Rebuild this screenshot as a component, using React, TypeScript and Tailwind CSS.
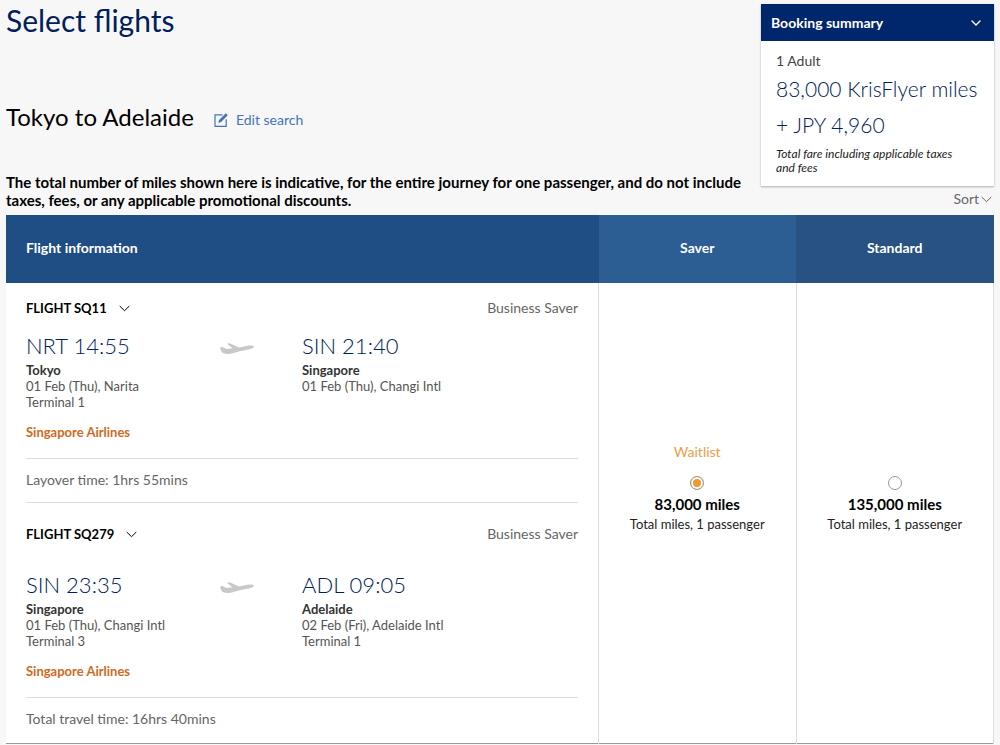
import { useState } from 'react'
import { ChevronDown } from 'lucide-react'

interface Stop {
  code: string
  time: string
  city: string
  details: string[]
}

interface Flight {
  number: string
  from: Stop
  to: Stop
}

const FLIGHTS: Flight[] = [
  {
    number: 'SQ11',
    from: { code: 'NRT', time: '14:55', city: 'Tokyo', details: ['01 Feb (Thu), Narita', 'Terminal 1'] },
    to: { code: 'SIN', time: '21:40', city: 'Singapore', details: ['01 Feb (Thu), Changi Intl'] },
  },
  {
    number: 'SQ279',
    from: { code: 'SIN', time: '23:35', city: 'Singapore', details: ['01 Feb (Thu), Changi Intl', 'Terminal 3'] },
    to: { code: 'ADL', time: '09:05', city: 'Adelaide', details: ['02 Feb (Fri), Adelaide Intl', 'Terminal 1'] },
  },
]

const FARES = [
  { id: 'saver', miles: '83,000', status: 'Waitlist' },
  { id: 'standard', miles: '135,000', status: '' },
]

function EditIcon() {
  return (
    <svg viewBox="0 0 14 14" className="h-3.5 w-3.5" fill="none" stroke="currentColor" aria-hidden="true">
      <path d="M8.5 1.8H1v11.5h11.2V6.2" strokeWidth="1.2" />
      <path d="M4.3 9.9l.8-2.9 6.2-6.2c.3-.3.7-.3 1 0l1 1c.3.3.3.7 0 1L7.1 9.1z" fill="currentColor" stroke="none" />
    </svg>
  )
}

function Chevron() {
  return (
    <svg viewBox="0 0 11 7" className="h-[7px] w-[11px]" fill="none" stroke="currentColor" aria-hidden="true">
      <path d="M.7 1l4.8 4.7L10.3 1" />
    </svg>
  )
}

function PlaneIcon() {
  return (
    <svg viewBox="0 0 34 12" className="h-3 w-[34px] text-[#c8c8c8]" fill="currentColor" aria-hidden="true">
      <path d="M0 4.4l2.2-.4 4.6 2 5.6-.7L7 .7 9.6.2l9.6 4.2 8.2-1.7c2.9-.6 5.8-.3 6.3.6.5 1-1.4 2.200-4.200 2.900l-9.600 2-7.200 2.100c-2.600.7-6.500 1-8.700.3C1.900 9.900.7 7.600 0 4.400z" />
    </svg>
  )
}

function StopInfo({ stop }: { stop: Stop }) {
  return (
    <div className="text-[13px] leading-4 text-[#555]">
      <p className="mb-[3px] text-[22px] leading-[26px] font-light text-[#00205b]">
        {stop.code} {stop.time}
      </p>
      <p className="font-bold text-[#333]">{stop.city}</p>
      {stop.details.map((line) => (
        <p key={line}>{line}</p>
      ))}
    </div>
  )
}

function FlightDetails({ flight, roomy }: { flight: Flight; roomy?: boolean }) {
  return (
    <section>
      <div className="flex items-center justify-between text-sm leading-5">
        <button type="button" className="flex items-center gap-3 text-[13px] font-bold text-black">
          FLIGHT {flight.number}
          <Chevron />
        </button>
        <span className="text-[#666]">Business Saver</span>
      </div>
      <div className={roomy ? 'mt-7 grid grid-cols-2' : 'mt-[15px] grid grid-cols-2'}>
        <div className="flex justify-between">
          <StopInfo stop={flight.from} />
          <div className="mt-2.5 mr-12">
            <PlaneIcon />
          </div>
        </div>
        <StopInfo stop={flight.to} />
      </div>
      <p className="mt-3 text-[13px] leading-5 font-bold text-[#cf6a1d]">Singapore Airlines</p>
    </section>
  )
}

function BookingSummary() {
  return (
    <aside className="bg-white shadow-[0_1px_2px_rgba(0,0,0,0.3)]">
      <button
        type="button"
        className="flex h-[37px] w-full items-center justify-between bg-[#00266b] pr-2.5 pl-2.5 text-sm leading-5 font-bold text-white"
      >
        Booking summary
        <ChevronDown className="h-4 w-4" strokeWidth={2} />
      </button>
      <div className="px-[15px] pt-2.5 pb-[11px]">
        <p className="text-sm leading-5 text-[#444]">1 Adult</p>
        <p className="text-[21px] leading-9 font-light whitespace-nowrap text-[#00205b]">
          83,000 KrisFlyer miles
          <br />+ JPY 4,960
        </p>
        <p className="mt-1 pr-3 text-xs leading-[14px] text-[#222] italic">
          Total fare including applicable taxes and fees
        </p>
      </div>
    </aside>
  )
}

export default function App() {
  const [fare, setFare] = useState('saver')

  return (
    <main className="min-h-screen bg-[#f7f7f7] px-1.5 font-['Lato',sans-serif]">
      <header className="flex justify-between gap-1">
        <div className="flex-1">
          <h1 className="text-[30px] leading-10 text-[#00205b]">Select flights</h1>
          <div className="mt-14 flex items-center gap-5">
            <h2 className="text-2xl leading-[42px] text-black">Tokyo to Adelaide</h2>
            <a href="#search" className="flex items-center gap-2 pt-1.5 text-sm text-[#4573b9]">
              <EditIcon />
              Edit search
            </a>
          </div>
          <p className="mt-[35px] text-[15px] leading-[18px] font-bold text-black">
            The total number of miles shown here is indicative, for the entire journey for one passenger, and do not
            include taxes, fees, or any applicable promotional discounts.
          </p>
        </div>
        <div className="w-[233px] pt-1">
          <BookingSummary />
          <div className="mt-[3px] flex justify-end">
            <button type="button" className="flex items-center gap-0.5 pr-0.5 text-sm leading-5 text-[#666]">
              Sort
              <Chevron />
            </button>
          </div>
        </div>
      </header>

      <table className="mt-1.5 w-full table-fixed border-collapse bg-white">
        <thead>
          <tr className="h-[68px] text-sm text-white">
            <th scope="col" className="w-3/5 bg-[#1f4e84] px-5 pb-0.5 text-left font-bold">
              Flight information
            </th>
            <th scope="col" className="w-1/5 bg-[#2c5d93] pb-0.5 font-bold">
              Saver
            </th>
            <th scope="col" className="w-1/5 bg-[#285282] pb-0.5 font-bold">
              Standard
            </th>
          </tr>
        </thead>
        <tbody>
          <tr className="border-b border-[#999]">
            <td className="px-5 pt-[15px] pb-3.5 align-top">
              <FlightDetails flight={FLIGHTS[0]} />
              <p className="mt-4 mb-[21px] border-y border-[#ddd] pt-[11px] pb-3 text-sm leading-5 text-[#666]">
                Layover time: 1hrs 55mins
              </p>
              <FlightDetails flight={FLIGHTS[1]} roomy />
              <p className="mt-4 border-t border-[#ddd] pt-[11px] text-sm leading-5 text-[#666]">
                Total travel time: 16hrs 40mins
              </p>
            </td>
            {FARES.map((option) => (
              <td key={option.id} className="border-x border-[#ddd] pb-[50px] text-center align-middle">
                <label className="flex flex-col items-center">
                  <span className="h-5 text-sm leading-5 text-[#e8a04b]">{option.status}</span>
                  <input
                    type="radio"
                    name="fare"
                    value={option.id}
                    checked={fare === option.id}
                    onChange={() => setFare(option.id)}
                    className="mt-3.5 h-3.5 w-3.5 appearance-none rounded-full border border-[#999] bg-white checked:bg-[#ee9a2e] checked:shadow-[inset_0_0_0_2px_white]"
                  />
                  <span className="mt-1 text-[15px] leading-5 font-bold text-black">{option.miles} miles</span>
                  <span className="text-[13px] leading-5 text-[#222]">Total miles, 1 passenger</span>
                </label>
              </td>
            ))}
          </tr>
        </tbody>
      </table>
    </main>
  )
}
